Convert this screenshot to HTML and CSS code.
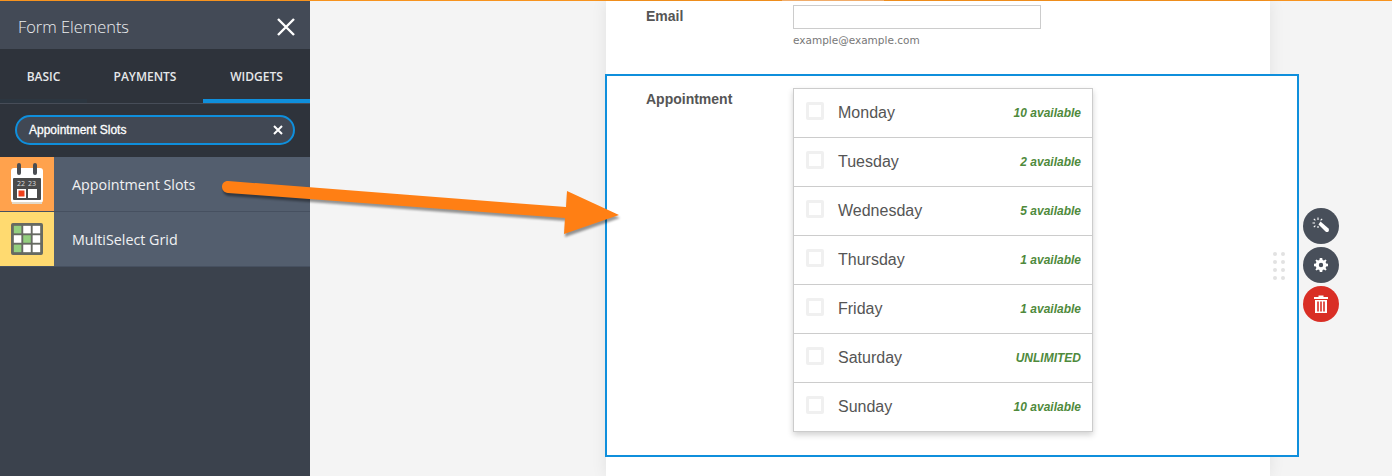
FILE: index.html
```html
<!DOCTYPE html>
<html lang="en">
<head>
  <meta charset="UTF-8">
  <meta name="viewport" content="width=device-width, initial-scale=1.0">
  <title>Form Elements</title>
  <link rel="stylesheet" href="styles.css">
</head>
<body>
  <div class="top-line"></div>
  <div class="app">
    <aside class="sidebar">
      <div class="side-title">
        <span>Form Elements</span>
        <svg class="close-icon" width="20" height="20" viewBox="0 0 20 20"><path d="M2 2 18 18M18 2 2 18" stroke="#fff" stroke-width="2.4" fill="none"/></svg>
      </div>
      <div class="tabs">
        <div class="tab">BASIC</div>
        <div class="tab">PAYMENTS</div>
        <div class="tab active">WIDGETS</div>
      </div>
      <div class="search-wrap">
        <div class="search">
          <span>Appointment Slots</span>
          <svg width="10" height="10" viewBox="0 0 10 10"><path d="M1 1 9 9M9 1 1 9" stroke="#fff" stroke-width="2" fill="none"/></svg>
        </div>
      </div>
      <div class="widget">
        <div class="widget-icon orange">
          <svg width="34" height="42" viewBox="0 0 34 42">
            <rect x="1" y="5" width="32" height="35" rx="3" fill="#fff"/>
            <rect x="2" y="39" width="30" height="2" fill="#e3d9c8"/>
            <rect x="7" y="0" width="4" height="12" rx="2" fill="#4a4d52"/>
            <rect x="23" y="0" width="4" height="12" rx="2" fill="#4a4d52"/>
            <rect x="3" y="15" width="28" height="22" rx="1" fill="#4a4a4a"/>
            <rect x="7" y="26" width="9" height="9" fill="#fff"/>
            <rect x="8.500" y="27.500" width="6" height="6" fill="#f0401c"/>
            <rect x="18" y="26" width="9" height="9" fill="#fff"/>
            <text x="7" y="23" class="cal-num">22</text>
            <text x="18" y="23" class="cal-num">23</text>
          </svg>
        </div>
        <div class="widget-name">Appointment Slots</div>
      </div>
      <div class="widget">
        <div class="widget-icon yellow">
          <svg width="32" height="32" viewBox="0 0 34 34">
            <rect x="0" y="0" width="34" height="34" rx="2" fill="#666a62"/>
            <rect x="3" y="3" width="8" height="8" fill="#93cf7f"/>
            <rect x="13" y="3" width="8" height="8" fill="#fff"/>
            <rect x="23" y="3" width="8" height="8" fill="#fff"/>
            <rect x="3" y="13" width="8" height="8" fill="#fff"/>
            <rect x="13" y="13" width="8" height="8" fill="#93cf7f"/>
            <rect x="23" y="13" width="8" height="8" fill="#fff"/>
            <rect x="3" y="23" width="8" height="8" fill="#93cf7f"/>
            <rect x="13" y="23" width="8" height="8" fill="#fff"/>
            <rect x="23" y="23" width="8" height="8" fill="#fff"/>
          </svg>
        </div>
        <div class="widget-name">MultiSelect Grid</div>
      </div>
    </aside>

    <main class="stage">
      <div class="form-card">
        <div class="line email-line">
          <label class="line-label">Email</label>
          <div>
            <div class="text-input"></div>
            <div class="sub-label">example@example.com</div>
          </div>
        </div>
        <div class="line selected">
          <label class="line-label">Appointment</label>
          <div class="slots">
            <div class="slot"><span class="check"></span><span class="day">Monday</span><span class="avail">10 available</span></div>
            <div class="slot"><span class="check"></span><span class="day">Tuesday</span><span class="avail">2 available</span></div>
            <div class="slot"><span class="check"></span><span class="day">Wednesday</span><span class="avail">5 available</span></div>
            <div class="slot"><span class="check"></span><span class="day">Thursday</span><span class="avail">1 available</span></div>
            <div class="slot"><span class="check"></span><span class="day">Friday</span><span class="avail">1 available</span></div>
            <div class="slot"><span class="check"></span><span class="day">Saturday</span><span class="avail">UNLIMITED</span></div>
            <div class="slot"><span class="check"></span><span class="day">Sunday</span><span class="avail">10 available</span></div>
          </div>
          <div class="drag-dots"><i></i><i></i><i></i><i></i><i></i><i></i><i></i><i></i></div>
          <div class="tools">
            <div class="tool">
              <svg width="18" height="18" viewBox="0 0 18 18">
                <path d="M6.500 7.500 8.500 4.500 16.500 11.500Q17.500 13 16.500 14.500 15 15.500 13.500 14.500Z" fill="#fff"/>
                <path d="M6 0.500V3M0.500 6H3M1.800 1.800 3.400 3.400M1.800 10.200 3.400 8.600M10.200 1.800 8.600 3.400M6 9V11" stroke="#fff" stroke-width="1.100" fill="none"/>
              </svg>
            </div>
            <div class="tool">
              <svg width="14" height="14" viewBox="0 0 14 14">
                <path fill="#fff" fill-rule="evenodd" d="M5.800 0H8.200L8.600 1.900 9.900 2.400 11.500 1.400 12.600 2.500 11.600 4.100 12.100 5.400 14 5.800V8.200L12.100 8.600 11.600 9.900 12.600 11.500 11.500 12.600 9.900 11.600 8.600 12.100 8.200 14H5.800L5.400 12.100 4.100 11.600 2.500 12.600 1.400 11.500 2.400 9.900 1.900 8.600 0 8.200V5.800L1.900 5.400 2.400 4.100 1.400 2.500 2.500 1.400 4.100 2.400 5.400 1.900ZM7 4.800A2.200 2.200 0 1 0 7 9.200 2.200 2.200 0 1 0 7 4.800Z"/>
              </svg>
            </div>
            <div class="tool red">
              <svg width="14" height="18" viewBox="0 0 14 18">
                <path fill="#fff" fill-rule="evenodd" d="M0 2H4.500V0.500H9.500V2H14V4H0ZM1 5H13V18H1ZM3.200 6.500V16.500H4.800V6.500ZM6.200 6.500V16.500H7.800V6.500ZM9.200 6.500V16.500H10.800V6.500Z"/>
              </svg>
            </div>
          </div>
        </div>
      </div>
    </main>
  </div>

  <!-- annotation arrow over the screenshot -->
  <svg class="arrow" width="420" height="80" viewBox="0 0 420 80">
    <path d="M18 11C 10 11 10 22 18 23L355 48 354 64 409 45 357 21 356 37Z" fill="#ff7f14"/>
  </svg>
</body>
</html>
```

FILE: styles.css
```css
/***----BASIC----***/
html, body {
  margin: 0;
  height: 100%;
  overflow: hidden;
}
body {
  position: relative;
  font-family: 'Liberation Sans', Arial, sans-serif;
  background: #f4f4f4;
}
.top-line {
  height: 1px;
  background: linear-gradient(to right, #f7931e 782px, #f9b36e 782px, #f9b36e 884px, #f7931e 884px);
}
.app {
  display: flex;
  height: 475px;
}

/***----Sidebar----***/
.sidebar {
  width: 310px;
  flex: none;
  background: #3b424d;
  font-family: 'Open Sans', sans-serif;
  color: #fff;
}
.side-title {
  height: 48px;
  display: flex;
  align-items: center;
  justify-content: space-between;
  padding: 3px 14px 0 18px;
  box-sizing: border-box;
  background: #434a56;
  font-size: 16.4px;
  font-weight: 300;
  color: #eceef0;
}
.tabs {
  display: flex;
  height: 54px;
  background: #2e333b;
  border-bottom: 1px solid #474d58;
}
.tab {
  width: 87px;
  padding-top: 19px;
  box-sizing: border-box;
  text-align: center;
  font-size: 12px;
  font-weight: 600;
  color: #e6e8ea;
}
.tab:first-child {
  border-bottom: 4px solid #2c3640;
}
.tab:nth-child(2) {
  width: 116px;
}
.tab.active {
  width: 107px;
  border-bottom: 4px solid #0f8fdc;
}
.search-wrap {
  height: 53px;
  padding-top: 11px;
  box-sizing: border-box;
  background: #2e333b;
}
.search {
  height: 30px;
  margin: 0 15px;
  padding: 0 10px 0 12px;
  display: flex;
  align-items: center;
  justify-content: space-between;
  box-sizing: border-box;
  background: #414854;
  border: 2px solid #0f8fdc;
  border-radius: 15px;
  font-family: 'Liberation Sans', Arial, sans-serif;
  font-size: 12px;
  -webkit-text-stroke: 0.3px #fff;
}
.widget {
  height: 55px;
  display: flex;
  background: #535e6e;
  border-bottom: 1px solid #465060;
  box-sizing: border-box;
}
.widget-icon {
  width: 54px;
  flex: none;
  display: flex;
  align-items: center;
  justify-content: center;
}
.orange {
  background: #ffa24d;
}
.yellow {
  background: #ffda70;
}
.widget-name {
  padding: 18px 0 0 18px;
  font-size: 14.3px;
  color: #f0f1f3;
}
.cal-num {
  font-family: 'Open Sans', sans-serif;
  font-size: 7px;
  fill: #ddd;
}

/***----Form----***/
.stage {
  flex: 1;
  padding-left: 296px;
}
.form-card {
  width: 664px;
  height: 475px;
  background: #fff;
  box-shadow: 0 0 15px rgba(0, 0, 0, 0.08);
}
.line {
  display: flex;
  box-sizing: border-box;
}
.line-label {
  width: 147px;
  flex: none;
  font-size: 14px;
  font-weight: 700;
  color: #555;
}
.email-line {
  height: 73px;
  padding: 4px 0 0 40px;
}
.email-line .line-label {
  padding-top: 3px;
}
.text-input {
  width: 248px;
  height: 24px;
  box-sizing: border-box;
  border: 1px solid #ccc;
  background: #fff;
}
.sub-label {
  margin-top: 5px;
  font-family: 'DejaVu Sans', sans-serif;
  font-size: 10.5px;
  color: #777;
}

.selected {
  position: relative;
  width: 694px;
  height: 383px;
  margin-left: -1px;
  padding: 12px 0 0 39px;
  border: 2px solid #0f8fdc;
  background: #fff;
}
.selected .line-label {
  padding-top: 3px;
}
.slots {
  width: 300px;
  height: 344px;
  box-sizing: border-box;
  border: 1px solid #ccc;
  background: #fff;
  box-shadow: 0 3px 6px rgba(0, 0, 0, 0.18);
}
.slot {
  height: 49px;
  padding: 0 11px 0 12px;
  display: flex;
  align-items: center;
  box-sizing: border-box;
  border-bottom: 1px solid #ccc;
}
.slot:last-child {
  height: 48px;
  border-bottom: none;
}
.check {
  width: 18px;
  height: 18px;
  flex: none;
  margin-top: -5px;
  box-sizing: border-box;
  border: 3px solid #f0f0f0;
  border-radius: 2px;
}
.day {
  flex: 1;
  margin-left: 14px;
  font-size: 16px;
  color: #555;
}
.avail {
  font-size: 12px;
  font-weight: 700;
  font-style: italic;
  color: #4f8a3c;
}

.drag-dots {
  position: absolute;
  left: 666px;
  top: 176px;
  display: grid;
  grid-template-columns: 4px 4px;
  gap: 4px;
}
.drag-dots i {
  width: 4px;
  height: 4px;
  border-radius: 50%;
  background: #e2e2e2;
}
.tools {
  position: absolute;
  left: 696px;
  top: 132px;
  display: flex;
  flex-direction: column;
  gap: 3px;
}
.tool {
  width: 36px;
  height: 36px;
  display: flex;
  align-items: center;
  justify-content: center;
  border-radius: 50%;
  background: #484f5a;
}
.tool.red {
  background: #d92e25;
}

/***----Arrow----***/
.arrow {
  position: absolute;
  left: 210px;
  top: 170px;
  filter: drop-shadow(1px 3px 1px rgba(0, 0, 0, 0.4));
}
```
